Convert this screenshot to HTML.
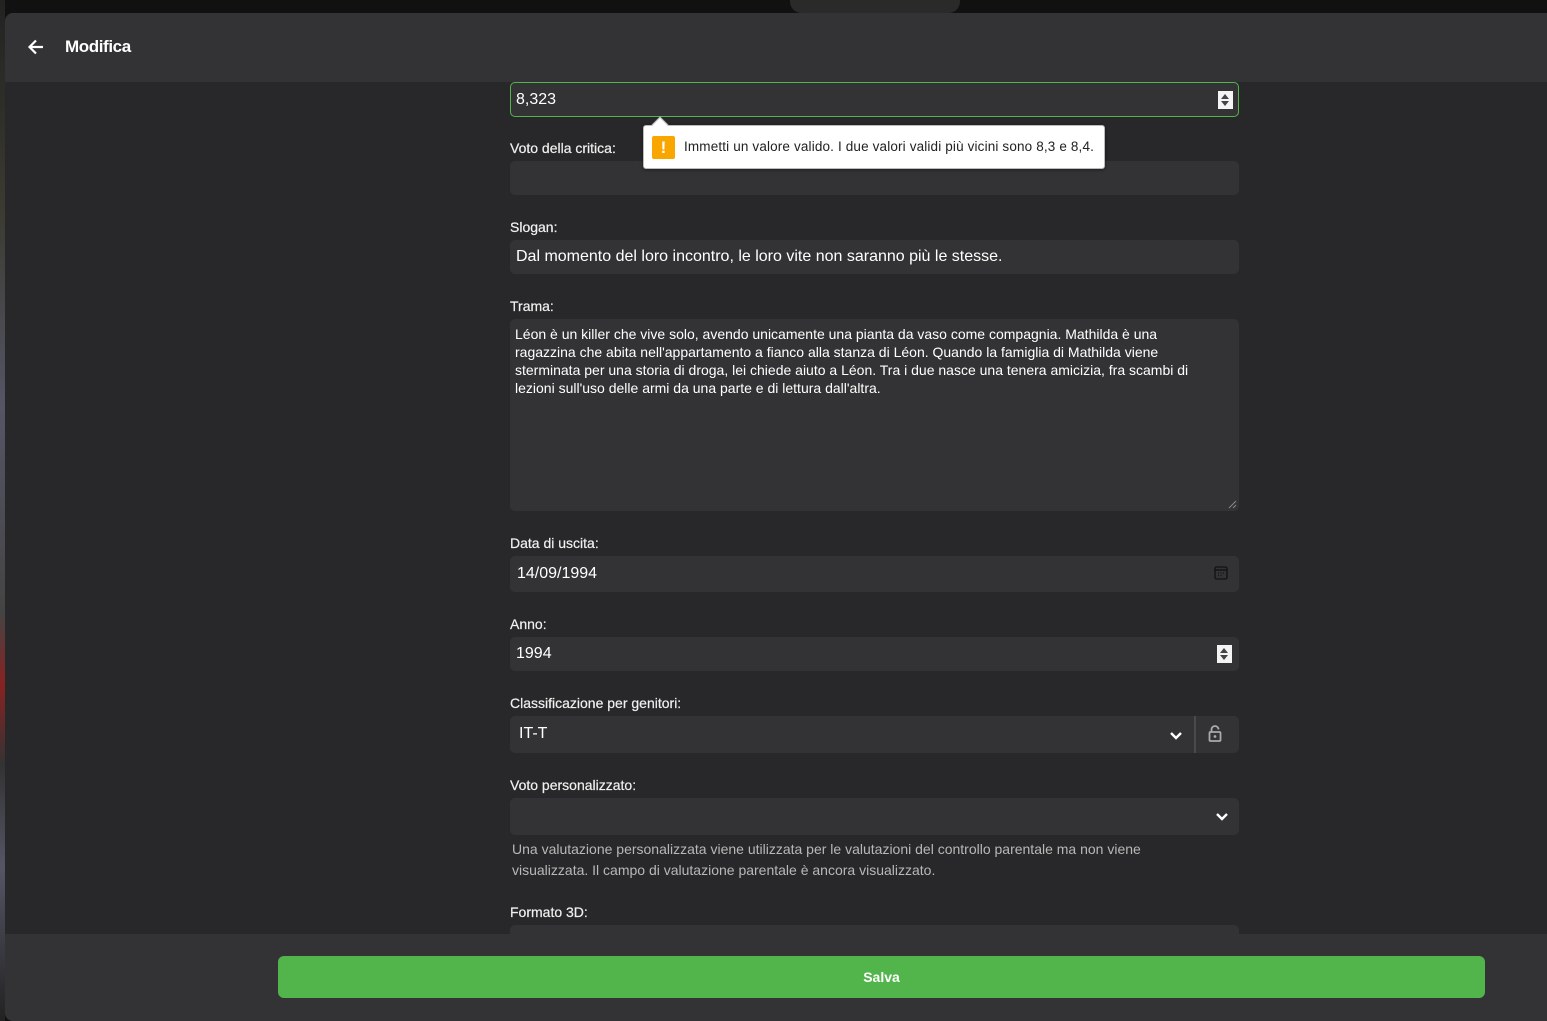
<!DOCTYPE html>
<html><head><meta charset="utf-8">
<style>
*{box-sizing:border-box;margin:0;padding:0}
body{width:1547px;height:1021px;overflow:hidden;background:#111;font-family:"Liberation Sans",sans-serif;color:#e8e8e8;position:relative}
.bgl{position:absolute;left:0;top:0;width:5px;height:1021px;background:linear-gradient(#222,#3a3a30 20%,#556 40%,#444 60%,#822 67%,#333 75%,#556 85%,#222)}
.tabs{position:absolute;left:790px;top:-10px;width:170px;height:23px;border-radius:12px;background:#2a2a2a}
.dlg{position:absolute;left:5px;top:13px;width:1542px;height:1008px;background:#28282a;border-radius:8px 0 0 8px;overflow:hidden}
.hdr{position:absolute;left:0;top:0;width:100%;height:69px;background:#333335}
.hdr .t{position:absolute;left:60px;top:24px;font-size:17px;font-weight:bold;color:#fff;letter-spacing:-0.4px}
.a{position:absolute}
.lbl{position:absolute;left:505px;font-size:14px;color:#f0f0f0;font-weight:500;-webkit-text-stroke:0.2px #f0f0f0}
.inp{position:absolute;left:505px;width:729px;background:#333335;border-radius:5px}
.val{position:absolute;left:6px;font-size:16px;color:#fff}
.spin{position:absolute;right:7px;width:15px;height:18px;background:#f4f4f4}
.spin:before{content:"";position:absolute;left:3px;top:3px;border-left:4.5px solid transparent;border-right:4.5px solid transparent;border-bottom:5px solid #444}
.spin:after{content:"";position:absolute;left:3px;top:10px;border-left:4.5px solid transparent;border-right:4.5px solid transparent;border-top:5px solid #444}
.ftr{position:absolute;left:0;top:921px;width:100%;height:87px;background:#333335}
.btn{position:absolute;left:273px;top:22px;width:1207px;height:42px;background:#52b54b;border-radius:6px;text-align:center;line-height:42px;font-weight:bold;font-size:14px;color:#fff}
.tip{position:absolute;left:638px;top:112px;width:462px;height:44px;background:#fff;border:1px solid #bbb;border-radius:3px;color:#222;font-size:13.5px;box-shadow:0 1px 3px rgba(0,0,0,.4)}
.tip .ic{position:absolute;left:8px;top:10px;width:23px;height:23px;background:#f9a600;border-radius:2px;color:#fff;font-weight:bold;text-align:center;line-height:23px;font-size:17px}
.tip .tx{position:absolute;left:40px;top:13px;white-space:nowrap;letter-spacing:0.15px}
.tip .ar{position:absolute;left:10px;top:-7px;width:12px;height:12px;background:#fff;transform:rotate(45deg);border-left:1px solid #bbb;border-top:1px solid #bbb}
</style></head><body>
<div class="bgl"></div>
<div class="tabs"></div>
<div class="dlg">
 <div class="hdr">
  <svg class="a" style="left:21px;top:24px" width="20" height="20" viewBox="0 0 20 20"><path d="M17 10H4M10 3.5L3.5 10 10 16.5" stroke="#fff" stroke-width="2.2" fill="none"/></svg>
  <div class="t">Modifica</div>
 </div>

 <div class="inp" style="top:69px;height:35px;border:1px solid #52b54b"><div class="val" style="top:8px;left:5px">8,323</div><div class="spin" style="top:8px;right:5px"></div></div>

 <div class="lbl" style="top:127px">Voto della critica:</div>
 <div class="inp" style="top:148px;height:34px"></div>

 <div class="lbl" style="top:206px">Slogan:</div>
 <div class="inp" style="top:227px;height:34px"><div class="val" style="top:8px">Dal momento del loro incontro, le loro vite non saranno più le stesse.</div></div>

 <div class="lbl" style="top:285px">Trama:</div>
 <div class="inp" style="top:306px;height:192px">
  <div class="a" style="left:5px;top:6px;font-size:14px;line-height:18px;color:#fff;white-space:nowrap">Léon è un killer che vive solo, avendo unicamente una pianta da vaso come compagnia. Mathilda è una<br>ragazzina che abita nell'appartamento a fianco alla stanza di Léon. Quando la famiglia di Mathilda viene<br>sterminata per una storia di droga, lei chiede aiuto a Léon. Tra i due nasce una tenera amicizia, fra scambi di<br>lezioni sull'uso delle armi da una parte e di lettura dall'altra.</div>
  <svg class="a" style="right:2px;bottom:2px" width="9" height="9"><path d="M8 1L1 8M8 5L5 8" stroke="#888" stroke-width="1"/></svg>
 </div>

 <div class="lbl" style="top:522px">Data di uscita:</div>
 <div class="inp" style="top:543px;height:36px"><div class="val" style="top:9px;left:7px">14/09/1994</div>
  <svg class="a" style="right:11px;top:10px" width="14" height="14" viewBox="0 0 14 14"><rect x="1" y="1" width="12" height="12" rx="1.5" fill="none" stroke="#111" stroke-width="1.3"/><path d="M1 4h12" stroke="#111" stroke-width="1.3"/><path d="M4 7h1M6.5 7h1M9 7h1M4 9.5h1M6.5 9.5h1" stroke="#111" stroke-width="1.2"/></svg>
 </div>

 <div class="lbl" style="top:603px">Anno:</div>
 <div class="inp" style="top:624px;height:34px"><div class="val" style="top:8px">1994</div><div class="spin" style="top:8px"></div></div>

 <div class="lbl" style="top:682px">Classificazione per genitori:</div>
 <div class="inp" style="top:703px;height:37px"><div class="val" style="top:9px;left:9px">IT-T</div>
  <svg class="a" style="left:659px;top:15px" width="14" height="10"><path d="M2 2l5 5 5-5" stroke="#fff" stroke-width="2.4" fill="none"/></svg>
  <div class="a" style="left:684px;top:0;width:2px;height:37px;background:#4a4a4c"></div>
  <svg class="a" style="left:698px;top:9px" width="14" height="17" viewBox="0 0 14 17"><path d="M3.5 7V4.5a3.5 3.5 0 0 1 7 0" stroke="#aaa" stroke-width="1.8" fill="none"/><rect x="1.5" y="7" width="11" height="9" rx="1" fill="none" stroke="#aaa" stroke-width="1.8"/><circle cx="7" cy="11.5" r="1.4" fill="#aaa"/></svg>
 </div>

 <div class="lbl" style="top:764px">Voto personalizzato:</div>
 <div class="inp" style="top:785px;height:37px">
  <svg class="a" style="left:705px;top:14px" width="14" height="10"><path d="M2 2l5 5 5-5" stroke="#fff" stroke-width="2.4" fill="none"/></svg>
 </div>
 <div class="a" style="left:507px;top:826px;font-size:14px;line-height:21px;color:#b8b8b8">Una valutazione personalizzata viene utilizzata per le valutazioni del controllo parentale ma non viene<br>visualizzata. Il campo di valutazione parentale è ancora visualizzato.</div>

 <div class="lbl" style="top:891px">Formato 3D:</div>
 <div class="inp" style="top:912px;height:30px"></div>

 <div class="tip"><div class="ar"></div><div class="ic">!</div><div class="tx">Immetti un valore valido. I due valori validi più vicini sono 8,3 e 8,4.</div></div>

 <div class="ftr"><div class="btn">Salva</div></div>
</div>
</body></html>
